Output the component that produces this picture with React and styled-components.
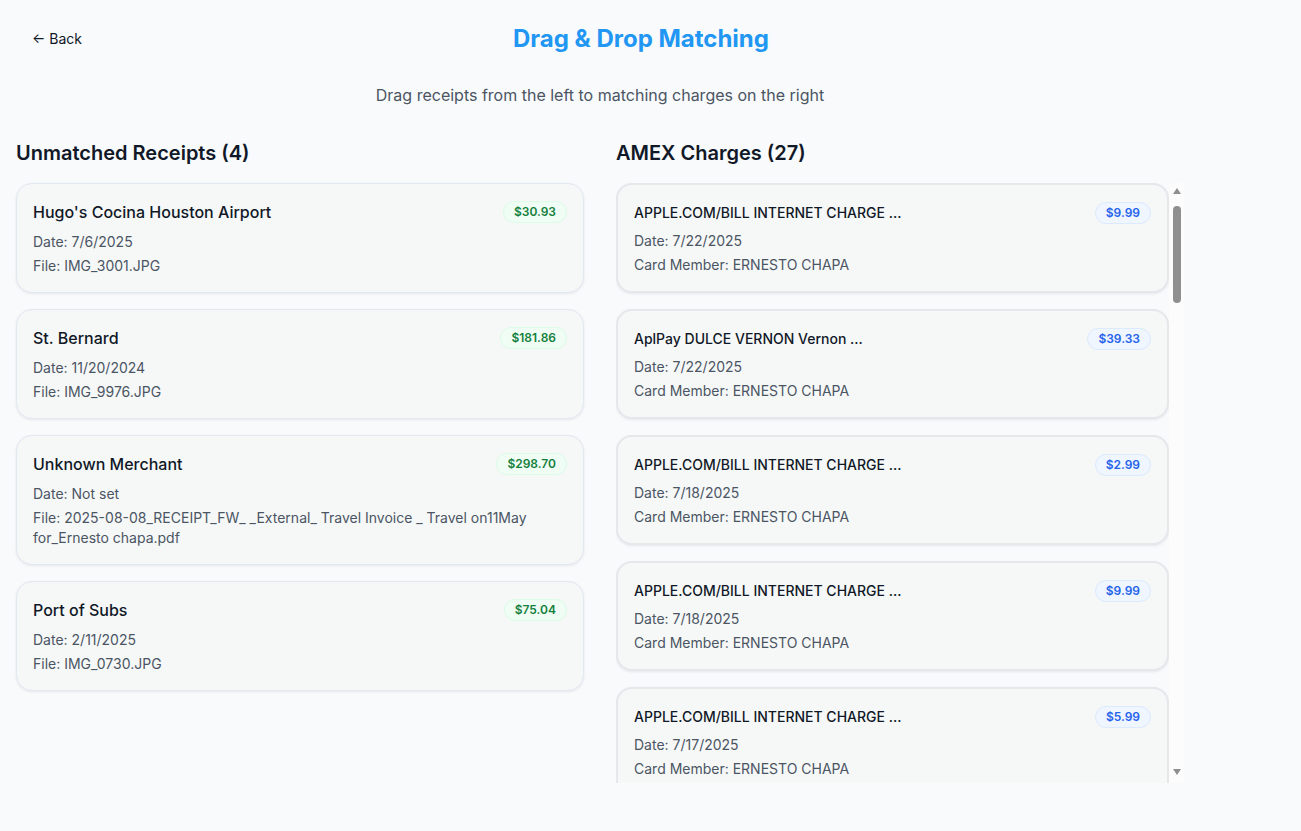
import React from 'react';
import styled, { createGlobalStyle } from 'styled-components';

const GlobalStyle = createGlobalStyle`
  * { box-sizing: border-box; }
  body {
    margin: 0;
    background: #f8fafc;
    font-family: Inter, "Noto Sans", "Liberation Sans", sans-serif;
    color: #111827;
  }
`;

const Page = styled.div`
  max-width: 1200px;
  padding: 20px 16px 16px;
`;

const Header = styled.div`
  display: flex;
  align-items: center;
  min-height: 38px;
`;

const BackButton = styled.button`
  background: none;
  border: none;
  padding: 8px 16px;
  font-family: inherit;
  font-size: 14px;
  line-height: 20px;
  color: #111827;
  cursor: pointer;
`;

const Title = styled.h1`
  flex: 1;
  margin: 0;
  text-align: center;
  font-size: 24px;
  line-height: 38px;
  font-weight: 700;
  color: #2196f3;
`;

const Subtitle = styled.p`
  margin: 25px 0 32px;
  text-align: center;
  font-size: 16px;
  line-height: 24px;
  color: #4b5563;
`;

const Columns = styled.div`
  display: grid;
  grid-template-columns: 1fr 1fr;
  gap: 32px;
`;

const Column = styled.section`
  display: flex;
  flex-direction: column;
  min-width: 0;
`;

const ColumnTitle = styled.h2`
  margin: 0 0 16px;
  font-size: 20px;
  line-height: 28px;
  font-weight: 600;
  color: #111827;
`;

const List = styled.div`
  display: flex;
  flex-direction: column;
  gap: 16px;
`;

const ScrollArea = styled.div`
  display: flex;
  height: 600px;
`;

const ScrollList = styled(List)`
  flex: 1;
  min-width: 0;
  overflow-y: auto;
  scrollbar-width: none;
  &::-webkit-scrollbar { display: none; }
`;

// drawn scrollbar (classic look with arrows)
const ScrollBar = styled.div`
  width: 15px;
  flex-shrink: 0;
  display: flex;
  flex-direction: column;
  align-items: center;
  background: #fcfcfc;
`;

const Arrow = styled.div`
  width: 15px;
  height: 15px;
  display: flex;
  align-items: center;
  justify-content: center;
  ${p => p.$down && 'margin-bottom: 5px;'}
  &::before {
    content: '';
    border-left: 4.5px solid transparent;
    border-right: 4.5px solid transparent;
    ${p => (p.$down
      ? 'border-top: 6px solid #8f8f8f; margin-top: 2px;'
      : 'border-bottom: 6px solid #8f8f8f; margin-top: 1px;')}
  }
`;

const Track = styled.div`
  flex: 1;
  width: 100%;
  display: flex;
  justify-content: center;
`;

const Thumb = styled.div`
  width: 8px;
  height: 97px;
  margin-top: 8px;
  border-radius: 4px;
  background: #8f8f8f;
`;

const Card = styled.div`
  flex-shrink: 0;
  background: #f6f8f8;
  border: ${p => (p.$charge ? '2px solid #e5e7eb' : '1px solid #e2e8f0')};
  border-radius: 16px;
  padding: 16px;
  box-shadow: 0 1px 3px rgba(15, 23, 42, 0.08);
  cursor: grab;
`;

const CardTop = styled.div`
  display: flex;
  align-items: center;
  justify-content: space-between;
  gap: 12px;
  height: 24px;
  margin-bottom: ${p => (p.$charge ? '6px' : '8px')};
`;

const CardName = styled.div`
  font-size: ${p => (p.$charge ? '14px' : '16px')};
  font-weight: 500;
  line-height: 24px;
  color: #111827;
`;

const Amount = styled.span`
  flex-shrink: 0;
  padding: 2px 10px;
  border-radius: 999px;
  font-size: 12px;
  line-height: 16px;
  font-weight: 600;
  background: ${p => (p.$tone === 'blue' ? '#eff6ff' : '#f0fdf4')};
  border: 1px solid ${p => (p.$tone === 'blue' ? '#dbeafe' : '#dcfce7')};
  color: ${p => (p.$tone === 'blue' ? '#2563eb' : '#15803d')};
`;

const Meta = styled.div`
  font-size: 14px;
  line-height: 20px;
  color: #4b5563;
  & + & { margin-top: 4px; }
`;

const receipts = [
  { name: "Hugo's Cocina Houston Airport", amount: '$30.93', date: '7/6/2025', file: 'IMG_3001.JPG' },
  { name: 'St. Bernard', amount: '$181.86', date: '11/20/2024', file: 'IMG_9976.JPG' },
  { name: 'Unknown Merchant', amount: '$298.70', date: 'Not set', file: '2025-08-08_RECEIPT_FW_ _External_ Travel Invoice _ Travel on11May for_Ernesto chapa.pdf' },
  { name: 'Port of Subs', amount: '$75.04', date: '2/11/2025', file: 'IMG_0730.JPG' },
];

const charges = [
  { name: 'APPLE.COM/BILL INTERNET CHARGE ...', amount: '$9.99', date: '7/22/2025' },
  { name: 'AplPay DULCE VERNON Vernon ...', amount: '$39.33', date: '7/22/2025' },
  { name: 'APPLE.COM/BILL INTERNET CHARGE ...', amount: '$2.99', date: '7/18/2025' },
  { name: 'APPLE.COM/BILL INTERNET CHARGE ...', amount: '$9.99', date: '7/18/2025' },
  { name: 'APPLE.COM/BILL INTERNET CHARGE ...', amount: '$5.99', date: '7/17/2025' },
  { name: 'UBER TRIP HELP.UBER.COM ...', amount: '$24.17', date: '7/15/2025' },
  { name: 'AplPay STARBUCKS HOUSTON ...', amount: '$6.45', date: '7/14/2025' },
  { name: 'UNITED AIRLINES HOUSTON ...', amount: '$412.60', date: '7/10/2025' },
  { name: 'AplPay HUGOS COCINA HOUSTON ...', amount: '$30.93', date: '7/6/2025' },
  { name: 'MARRIOTT HOTELS DALLAS ...', amount: '$289.12', date: '7/3/2025' },
  { name: 'APPLE.COM/BILL INTERNET CHARGE ...', amount: '$0.99', date: '7/1/2025' },
  { name: 'AplPay SHELL OIL HOUSTON ...', amount: '$48.21', date: '6/29/2025' },
  { name: 'LYFT RIDE SAN FRANCISCO ...', amount: '$31.80', date: '6/27/2025' },
  { name: 'DELTA AIR LINES ATLANTA ...', amount: '$356.40', date: '6/25/2025' },
  { name: 'APPLE.COM/BILL INTERNET CHARGE ...', amount: '$9.99', date: '6/22/2025' },
  { name: 'AplPay CHIPOTLE HOUSTON ...', amount: '$14.62', date: '6/20/2025' },
  { name: 'HILTON HOTELS AUSTIN ...', amount: '$219.77', date: '6/18/2025' },
  { name: 'AplPay PORT OF SUBS RENO ...', amount: '$75.04', date: '6/15/2025' },
  { name: 'APPLE.COM/BILL INTERNET CHARGE ...', amount: '$2.99', date: '6/12/2025' },
  { name: 'AMAZON MKTPLACE PMTS ...', amount: '$63.18', date: '6/10/2025' },
  { name: 'AplPay ST BERNARD DALLAS ...', amount: '$181.86', date: '6/8/2025' },
  { name: 'HERTZ RENT-A-CAR HOUSTON ...', amount: '$142.35', date: '6/5/2025' },
  { name: 'APPLE.COM/BILL INTERNET CHARGE ...', amount: '$5.99', date: '6/2/2025' },
  { name: 'AplPay PANERA BREAD ...', amount: '$12.48', date: '5/30/2025' },
  { name: 'SOUTHWEST AIRLINES DALLAS ...', amount: '$298.70', date: '5/28/2025' },
  { name: 'AplPay WHOLE FOODS HOUSTON ...', amount: '$27.54', date: '5/25/2025' },
  { name: 'APPLE.COM/BILL INTERNET CHARGE ...', amount: '$9.99', date: '5/22/2025' },
];

export default function App() {
  return (
    <>
      <GlobalStyle />
      <Page>
        <Header>
          <BackButton>← Back</BackButton>
          <Title>Drag &amp; Drop Matching</Title>
        </Header>
        <Subtitle>Drag receipts from the left to matching charges on the right</Subtitle>
        <Columns>
          <Column>
            <ColumnTitle>Unmatched Receipts ({receipts.length})</ColumnTitle>
            <List>
              {receipts.map((r, i) => (
                <Card key={i} draggable>
                  <CardTop>
                    <CardName>{r.name}</CardName>
                    <Amount>{r.amount}</Amount>
                  </CardTop>
                  <Meta>Date: {r.date}</Meta>
                  <Meta>File: {r.file}</Meta>
                </Card>
              ))}
            </List>
          </Column>
          <Column>
            <ColumnTitle>AMEX Charges ({charges.length})</ColumnTitle>
            <ScrollArea>
              <ScrollList>
                {charges.map((c, i) => (
                  <Card key={i} $charge>
                    <CardTop $charge>
                      <CardName $charge>{c.name}</CardName>
                      <Amount $tone="blue">{c.amount}</Amount>
                    </CardTop>
                    <Meta>Date: {c.date}</Meta>
                    <Meta>Card Member: ERNESTO CHAPA</Meta>
                  </Card>
                ))}
              </ScrollList>
              <ScrollBar>
                <Arrow />
                <Track><Thumb /></Track>
                <Arrow $down />
              </ScrollBar>
            </ScrollArea>
          </Column>
        </Columns>
      </Page>
    </>
  );
}
